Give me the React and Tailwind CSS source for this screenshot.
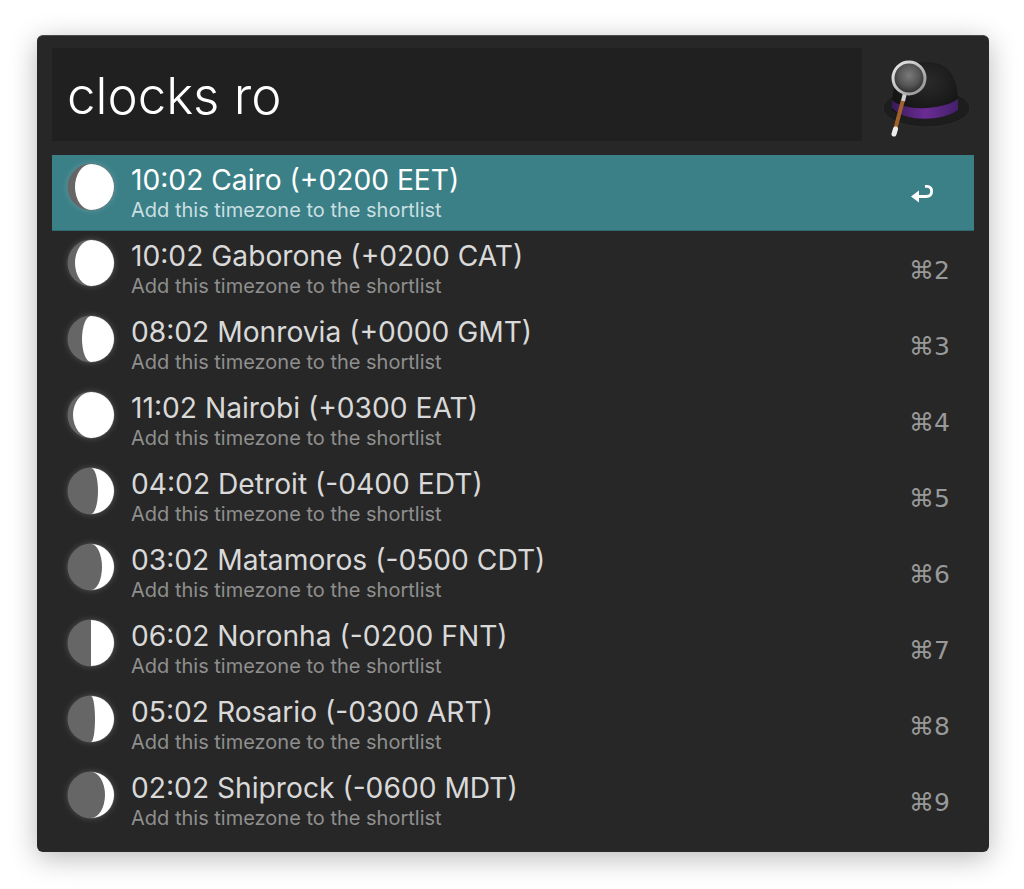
import React from 'react';

const rows = [
  { title: '10:02 Cairo (+0200 EET)', phase: -16, key: '' },
  { title: '10:02 Gaborone (+0200 CAT)', phase: -16, key: '2' },
  { title: '08:02 Monrovia (+0000 GMT)', phase: -9, key: '3' },
  { title: '11:02 Nairobi (+0300 EAT)', phase: -18, key: '4' },
  { title: '04:02 Detroit (-0400 EDT)', phase: 7, key: '5' },
  { title: '03:02 Matamoros (-0500 CDT)', phase: 11, key: '6' },
  { title: '06:02 Noronha (-0200 FNT)', phase: 0, key: '7' },
  { title: '05:02 Rosario (-0300 ART)', phase: 4, key: '8' },
  { title: '02:02 Shiprock (-0600 MDT)', phase: 14, key: '9' },
];

// lit part is always on the right, phase moves the terminator
const Moon = ({ phase }) => {
  const sweep = phase > 0 ? 0 : 1;
  const d = `M24 1 A23 23 0 0 1 24 47 A${Math.abs(phase)} 23 0 0 ${sweep} 24 1 Z`;
  return (
    <svg width="48" height="48" viewBox="0 0 48 48" className="shrink-0 drop-shadow-[0_0_3px_rgba(255,255,255,0.2)]">
      <circle cx="24" cy="24" r="23.5" fill="#666666" />
      <path d={d} fill="#ffffff" />
    </svg>
  );
};

const HatLogo = () => (
  <svg width="96" height="90" viewBox="0 0 96 90" className="shrink-0">
    <defs>
      <radialGradient id="crown" cx="55%" cy="35%" r="70%">
        <stop offset="0%" stopColor="#2a2a2a" />
        <stop offset="100%" stopColor="#101010" />
      </radialGradient>
      <linearGradient id="band" x1="0" x2="1" y1="0" y2="0">
        <stop offset="0%" stopColor="#3a1a58" />
        <stop offset="50%" stopColor="#6a2c94" />
        <stop offset="100%" stopColor="#43206a" />
      </linearGradient>
      <radialGradient id="lens" cx="50%" cy="42%" r="55%">
        <stop offset="0%" stopColor="#7a7a7a" />
        <stop offset="60%" stopColor="#555555" />
        <stop offset="100%" stopColor="#2e2e2e" />
      </radialGradient>
      <linearGradient id="rim" x1="0" x2="1" y1="0" y2="1">
        <stop offset="0%" stopColor="#ececec" />
        <stop offset="100%" stopColor="#8f8f8f" />
      </linearGradient>
    </defs>
    <ellipse cx="49.5" cy="58" rx="43.5" ry="19" fill="#1d1d1d" stroke="#2d2d2d" />
    <path d="M15 52 C17 26 24 12 50 12 C72 12 81 28 81 52 L81 60 C66 70 30 72 15 60 Z" fill="url(#crown)" />
    <path d="M15 50 C28 62 66 60 81 49 L81 60 C66 71 28 73 15 58 Z" fill="url(#band)" />
    <path d="M26 50 L18 80" stroke="#a0622a" strokeWidth="4" strokeLinecap="butt" />
    <path d="M18.5 79 L17 84" stroke="#eeeeee" strokeWidth="5" strokeLinecap="round" />
    <path d="M28 43 L26 51" stroke="#d0d0d0" strokeWidth="4" />
    <circle cx="32" cy="28" r="16" fill="url(#lens)" stroke="url(#rim)" strokeWidth="3" />
  </svg>
);

const ReturnIcon = () => (
  <svg width="24" height="20" viewBox="0 0 24 20" className="text-white">
    <path d="M15 3.4 H17 Q21.6 3.4 21.6 8.5 Q21.6 13.5 16 13.5 H5" fill="none" stroke="currentColor" strokeWidth="2.8" />
    <path d="M1 13.5 L9 7.5 V19.5 Z" fill="currentColor" />
  </svg>
);

const ResultRow = ({ row, selected }) => (
  <div className={`flex h-[76px] pl-[15px] pr-[24px] ${selected ? 'bg-[#3b7f87] border-b border-[#2f6a70]' : ''}`}>
    <div className="pt-[8px]">
      <Moon phase={row.phase} />
    </div>
    <div className="ml-[16px] flex-1 pt-[7px]">
      <div className={`text-[28.2px] leading-[36px] ${selected ? 'text-white' : 'text-[#d9d9d9]'}`}>{row.title}</div>
      <div className={`text-[20px] leading-[24px] ${selected ? 'text-[#c9dfe1]' : 'text-[#8f8f8f]'}`}>
        Add this timezone to the shortlist
      </div>
    </div>
    <div className="w-[40px] flex items-center justify-end">
      {selected ? (
        <div className="mr-[16px] mt-[1px]"><ReturnIcon /></div>
      ) : (
        <span className="text-[25px] font-medium text-[#999999] whitespace-nowrap mt-[4px] font-['DejaVu_Sans',sans-serif]">⌘{row.key}</span>
      )}
    </div>
  </div>
);

export default function App() {
  return (
    <div className="min-h-[889px] bg-white pt-[35px] pl-[37px] font-['Inter','Liberation_Sans',sans-serif]">
      <div className="w-[952px] h-[817px] rounded-[6px] bg-[#272727] border-t border-[#4a4a4a] pl-[15px] pt-[12px] shadow-[0_6px_28px_rgba(0,0,0,0.28)]">
        <div className="flex items-center">
          <div className="w-[810px] h-[93px] bg-[#202020] flex items-center pl-[15px]">
            <span className="text-[51px] font-light text-white mt-[4px]">clocks ro</span>
          </div>
          <div className="ml-[15px]"><HatLogo /></div>
        </div>
        <div className="w-[922px] mt-[14px]">
          {rows.map((row, i) => (
            <ResultRow key={row.title} row={row} selected={i === 0} />
          ))}
        </div>
      </div>
    </div>
  );
}
